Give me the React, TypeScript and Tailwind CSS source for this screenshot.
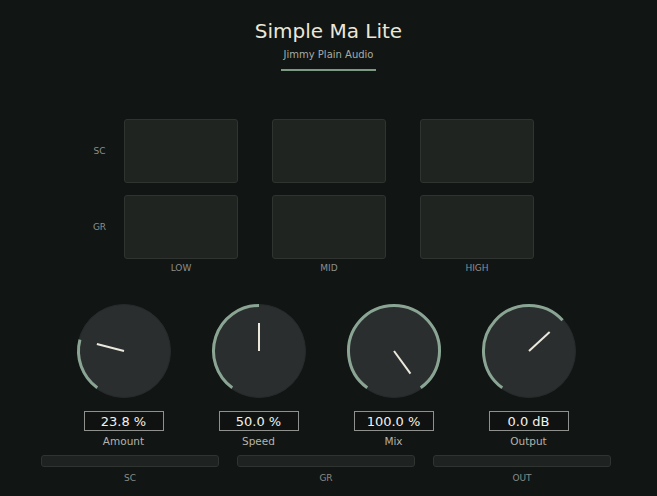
import React from "react";

const START = -144;
const RANGE = 288;

const polar = (r: number, deg: number) => {
  const a = (deg * Math.PI) / 180;
  return [50 + r * Math.sin(a), 50 - r * Math.cos(a)];
};

const Knob: React.FC<{ value: number; readout: string; name: string }> = ({ value, readout, name }) => {
  const end = START + value * RANGE;
  const [sx, sy] = polar(45.5, START);
  const [ex, ey] = polar(45.5, end);
  const large = end - START > 180 ? 1 : 0;
  const [px, py] = polar(28, end);

  return (
    <div className="w-[135px] flex flex-col items-center">
      <svg width="100" height="100" viewBox="0 0 100 100">
        <circle cx="50" cy="50" r="46.5" fill="#2b2e2f" stroke="#262a2a" strokeWidth="1" />
        <path
          d={`M ${sx} ${sy} A 45.5 45.5 0 ${large} 1 ${ex} ${ey}`}
          fill="none"
          stroke="#8aa594"
          strokeWidth="3"
        />
        <line x1="50" y1="50" x2={px} y2={py} stroke="#ebe8dd" strokeWidth="2" />
      </svg>
      <div className="mt-[10px] w-[80px] h-[20px] border border-[#8e918d] bg-[#0f1211] flex items-center justify-center text-[13px] leading-none text-[#f2f2ee]">
        {readout}
      </div>
      <span className="mt-[3px] text-[10.5px] leading-[14px] text-[#b3b3ab]">{name}</span>
    </div>
  );
};

const Scope: React.FC = () => (
  <div className="w-[114px] h-[64px] rounded-[3px] border border-[#2f3430] bg-[#1f2420]" />
);

const Meter: React.FC<{ label: string }> = ({ label }) => (
  <div className="w-[178px] flex flex-col items-center">
    <div className="w-full h-[12px] rounded-[3px] border border-[#2f3430] bg-[#1e2220]" />
    <span className="mt-[5px] text-[9px] leading-[12px] text-[#8a8c87]">{label}</span>
  </div>
);

export default function App() {
  return (
    <div
      className="w-[657px] h-[496px] bg-[#111514] flex flex-col overflow-hidden"
      style={{ fontFamily: "'DejaVu Sans', Verdana, sans-serif" }}
    >
      {/* header */}
      <div className="pt-[19px] flex flex-col items-center">
        <h1 className="text-[20px] leading-[24px] text-[#ebe7da]">Simple Ma Lite</h1>
        <span className="mt-[6px] text-[10px] leading-[12px] text-[#a6ada6]">Jimmy Plain Audio</span>
        <div className="mt-[8px] w-[95px] h-[2px] bg-[#7d9a84]" />
      </div>

      {/* band displays */}
      <div className="mt-[48px] flex flex-col gap-[12px]">
        {["SC", "GR"].map((row) => (
          <div key={row} className="flex items-center">
            <span className="ml-[77px] w-[47px] text-center pr-[2px] text-[9px] leading-[12px] text-[#8c8f8c]">
              {row}
            </span>
            <div className="flex gap-[34px]">
              <Scope />
              <Scope />
              <Scope />
            </div>
          </div>
        ))}
      </div>
      <div className="ml-[124px] mt-[3px] flex gap-[34px]">
        {["LOW", "MID", "HIGH"].map((b) => (
          <span key={b} className="w-[114px] text-center text-[9px] leading-[12px] text-[#8c8f8c]">
            {b}
          </span>
        ))}
      </div>

      {/* controls */}
      <div className="ml-[56px] mt-[27px] flex">
        <Knob value={0.238} readout="23.8 %" name="Amount" />
        <Knob value={0.5} readout="50.0 %" name="Speed" />
        <Knob value={1} readout="100.0 %" name="Mix" />
        <Knob value={0.665} readout="0.0 dB" name="Output" />
      </div>

      {/* meters */}
      <div className="ml-[41px] mt-[7px] flex gap-[18px]">
        <Meter label="SC" />
        <Meter label="GR" />
        <Meter label="OUT" />
      </div>
    </div>
  );
}
